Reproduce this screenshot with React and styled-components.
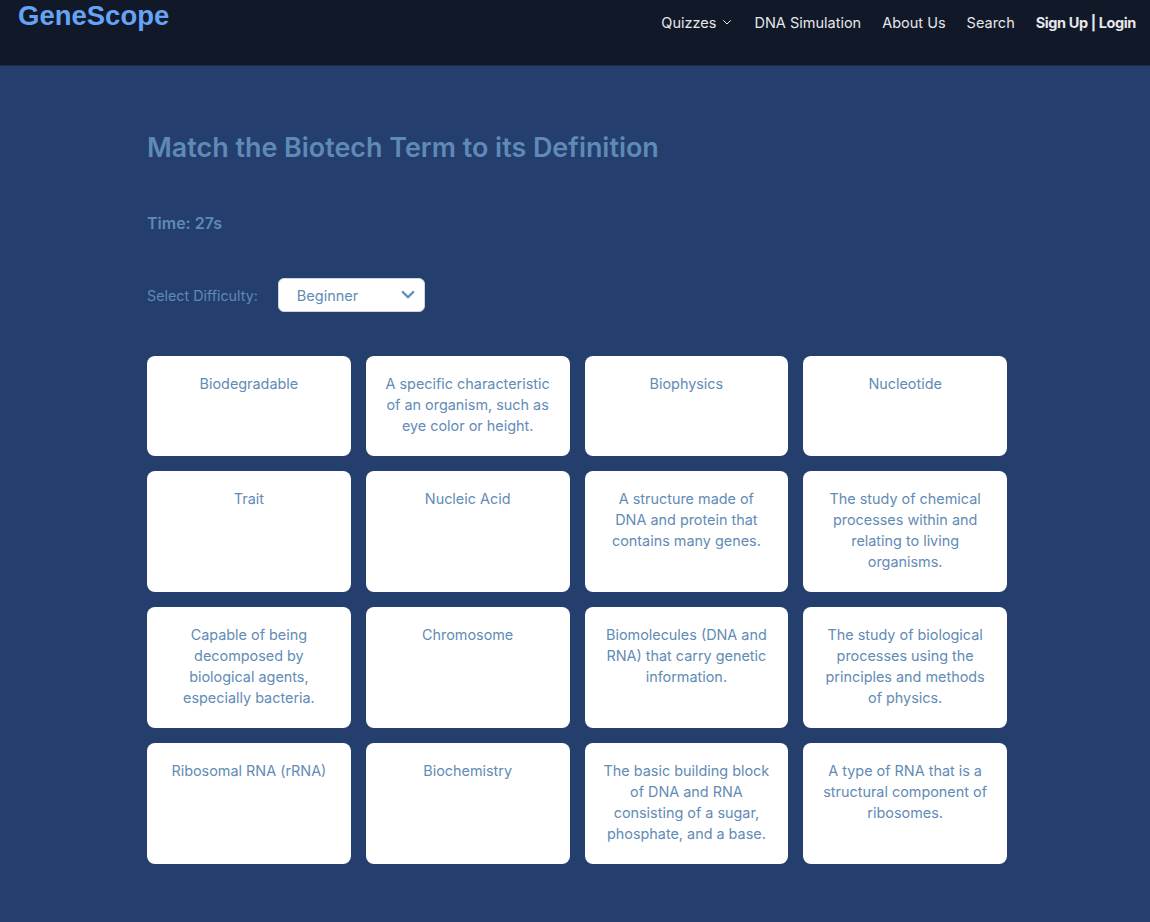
import React, { useState } from "react";
import styled, { createGlobalStyle } from "styled-components";

const GlobalStyle = createGlobalStyle`
  html, body {
    margin: 0;
    padding: 0;
    background: #243e6d;
  }
  body {
    font-family: Inter, "Noto Sans", sans-serif;
  }
`;

const Page = styled.div`
  min-height: 922px;
  background: #243e6d;
`;

const Header = styled.header`
  height: 66px;
  box-sizing: border-box;
  background: #111827;
  border-bottom: 1px solid #1f2b44;
  display: flex;
  justify-content: space-between;
  align-items: flex-start;
  padding: 0 14px 0 18px;
`;

const Logo = styled.div`
  font-family: "Liberation Sans", Arial, sans-serif;
  font-weight: 700;
  font-size: 27.5px;
  line-height: 32px;
  color: #64a3f6;
`;

const Nav = styled.nav`
  display: flex;
  align-items: center;
  gap: 21px;
  height: 44px;
`;

const NavItem = styled.span`
  display: flex;
  align-items: center;
  gap: 5px;
  font-size: 14.5px;
  color: #e5e7eb;
  white-space: nowrap;
`;

const Auth = styled.span`
  font-size: 14.5px;
  font-weight: 700;
  letter-spacing: -0.4px;
  color: #e5e7eb;
  white-space: nowrap;
`;

const Main = styled.main`
  padding: 63px 0 60px 147px;
  width: 860px;
`;

const Title = styled.h1`
  margin: 0;
  font-size: 26.9px;
  line-height: 36px;
  font-weight: 600;
  color: #5f8ab8;
`;

const Timer = styled.div`
  margin-top: 46px;
  font-size: 16px;
  line-height: 24px;
  font-weight: 600;
  color: #5f8ab8;
`;

const DifficultyRow = styled.div`
  margin-top: 43px;
  display: flex;
  align-items: center;
  gap: 20px;
`;

const Label = styled.label`
  font-size: 14.3px;
  color: #5f8ab8;
`;

const SelectBox = styled.div`
  position: relative;
  width: 147px;
  height: 34px;
  box-sizing: border-box;
  background: #fff;
  border: 1px solid #d1d5db;
  border-radius: 6px;
  display: flex;
  align-items: center;
  padding-left: 18px;
  font-size: 14.5px;
  color: #5f8ab8;
`;

const Chevron = styled.svg`
  position: absolute;
  right: 7px;
  top: 50%;
  transform: translateY(-50%);
`;

const Grid = styled.div`
  margin-top: 44px;
  display: grid;
  grid-template-columns: repeat(4, 1fr);
  column-gap: 15px;
  row-gap: 15px;
`;

const Card = styled.div`
  background: #fff;
  border-radius: 8px;
  padding: 17px 18px 20px;
  min-height: 63px;
  font-size: 14.4px;
  line-height: 21px;
  color: #628bb6;
  text-align: center;
  cursor: pointer;
`;

const cards = [
  "Biodegradable",
  "A specific characteristic of an organism, such as eye color or height.",
  "Biophysics",
  "Nucleotide",
  "Trait",
  "Nucleic Acid",
  "A structure made of DNA and protein that contains many genes.",
  "The study of chemical processes within and relating to living organisms.",
  "Capable of being decomposed by biological agents, especially bacteria.",
  "Chromosome",
  "Biomolecules (DNA and RNA) that carry genetic information.",
  "The study of biological processes using the principles and methods of physics.",
  "Ribosomal RNA (rRNA)",
  "Biochemistry",
  "The basic building block of DNA and RNA consisting of a sugar, phosphate, and a base.",
  "A type of RNA that is a structural component of ribosomes.",
];

export default function App() {
  const [level] = useState("Beginner");
  return (
    <Page>
      <GlobalStyle />
      <Header>
        <Logo>GeneScope</Logo>
        <Nav>
          <NavItem>
            Quizzes
            <svg width="12" height="12" viewBox="0 0 24 24" fill="none" stroke="#e5e7eb" strokeWidth="2" strokeLinecap="round" strokeLinejoin="round">
              <path d="M5 9l7 7 7-7" />
            </svg>
          </NavItem>
          <NavItem>DNA Simulation</NavItem>
          <NavItem>About Us</NavItem>
          <NavItem>Search</NavItem>
          <Auth>Sign Up | Login</Auth>
        </Nav>
      </Header>
      <Main>
        <Title>Match the Biotech Term to its Definition</Title>
        <Timer>Time: 27s</Timer>
        <DifficultyRow>
          <Label>Select Difficulty:</Label>
          <SelectBox>
            {level}
            <Chevron width="18" height="18" viewBox="0 0 24 24" fill="none" stroke="#5f8ab8" strokeWidth="3" strokeLinecap="round" strokeLinejoin="round">
              <path d="M5 8l7 7 7-7" />
            </Chevron>
          </SelectBox>
        </DifficultyRow>
        <Grid>
          {cards.map((c, i) => (
            <Card key={i}>{c}</Card>
          ))}
        </Grid>
      </Main>
    </Page>
  );
}
